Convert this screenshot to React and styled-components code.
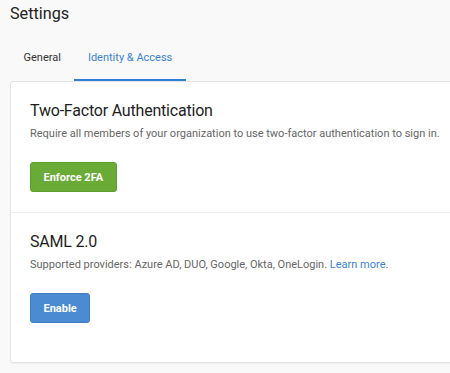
import React from 'react';
import styled, { createGlobalStyle } from 'styled-components';

const GlobalStyle = createGlobalStyle`
  html, body {
    margin: 0;
    padding: 0;
    background: #f9f9f9;
    font-family: Roboto, "Liberation Sans", sans-serif;
    color: #222;
  }
`;

const Page = styled.div`
  width: 450px;
  height: 373px;
  overflow: hidden;
  padding-left: 10px;
  box-sizing: border-box;
`;

const Title = styled.h1`
  margin: 0;
  padding-top: 3px;
  font-size: 16.2px;
  font-weight: 400;
  line-height: 22px;
  color: #222;
`;

const Tabs = styled.div`
  display: flex;
  margin-top: 13px;
`;

const Tab = styled.div`
  padding: 12px 13.5px 13px;
  font-size: 11px;
  line-height: 16px;
  color: ${ props => props.active ? '#3b82d4' : '#333' };
  border-bottom: 2px solid ${ props => props.active ? '#2f7fd8' : 'transparent' };
`;

const Card = styled.div`
  background: #fff;
  width: 460px;
  height: 282px;
  border: 1px solid #e4e4e4;
  border-radius: 3px;
  box-sizing: border-box;
  box-shadow: 0 1px 1px rgba(0, 0, 0, 0.04);
`;

const Section = styled.div`
  padding: 19px 19px 20px;
  border-bottom: ${ props => props.last ? 'none' : '1px solid #eeeeee' };
`;

const Heading = styled.h2`
  margin: 0;
  font-size: 16px;
  font-weight: 400;
  letter-spacing: -0.2px;
  line-height: 20px;
  color: #1e1e1e;
`;

const Text = styled.p`
  margin: 5px 0 0;
  font-size: 11px;
  line-height: 16px;
  color: #666;
`;

const Link = styled.a`
  color: #3b82d4;
  text-decoration: none;
`;

const Button = styled.button`
  display: block;
  margin-top: 20px;
  height: 30px;
  padding: 0 12.5px;
  border: 1px solid ${ props => props.color === 'green' ? '#5e9d2f' : '#3d7cc4' };
  border-radius: 3px;
  background: ${ props => props.color === 'green' ? '#6aab37' : '#4a8bd1' };
  color: #fff;
  font-family: inherit;
  font-size: 11px;
  font-weight: 700;
`;

const App = () => (
  <Page>
    <GlobalStyle />
    <Title>Settings</Title>
    <Tabs>
      <Tab>General</Tab>
      <Tab active>Identity &amp; Access</Tab>
    </Tabs>
    <Card>
      <Section>
        <Heading>Two-Factor Authentication</Heading>
        <Text>Require all members of your organization to use two-factor authentication to sign in.</Text>
        <Button color = "green">Enforce 2FA</Button>
      </Section>
      <Section last>
        <Heading>SAML 2.0</Heading>
        <Text>Supported providers: Azure AD, DUO, Google, Okta, OneLogin. <Link>Learn more</Link>.</Text>
        <Button color = "blue">Enable</Button>
      </Section>
    </Card>
  </Page>
);

export default App;
